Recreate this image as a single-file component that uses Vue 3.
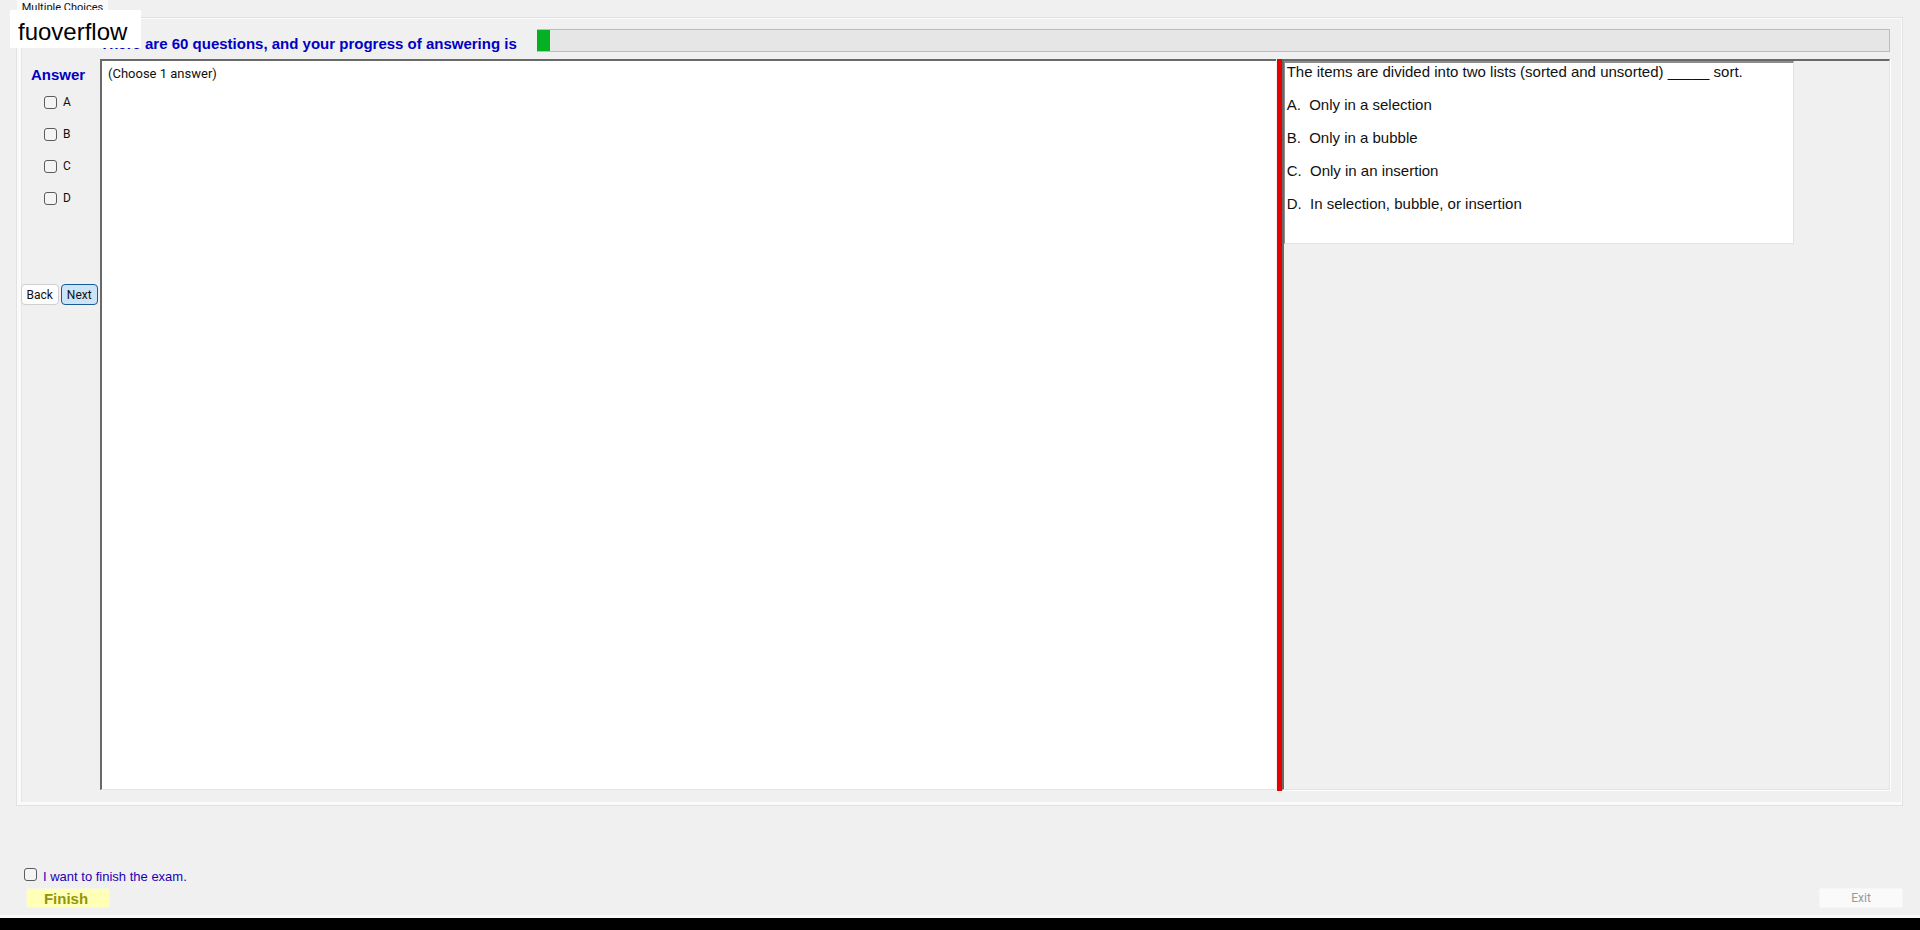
<script setup>
import { ref } from 'vue'

const total = 60
const progress = ref(1)
const options = ['A', 'B', 'C', 'D']
const chosen = ref([])
const wantsFinish = ref(false)
const lines = [
  'The items are divided into two lists (sorted and unsorted) _____ sort.',
  'A.  Only in a selection',
  'B.  Only in a bubble',
  'C.  Only in an insertion',
  'D.  In selection, bubble, or insertion'
]
</script>

<template>
  <div class="window">
    <div class="watermark">fuoverflow</div>
    <div class="tabs" role="tablist">
      <button class="tab" role="tab" aria-selected="true">Multiple Choices</button>
    </div>
    <main class="page">
      <div class="page-inner">
        <header class="status">
          <h1 class="status-text">There are {{ total }} questions, and your progress of answering is</h1>
          <div class="bar" role="progressbar" :aria-valuenow="progress" aria-label="Progress of answering">
            <div class="bar-fill" :style="{ width: progress + '%' }"></div>
          </div>
        </header>
        <div class="body">
          <aside class="answers">
            <h2 class="answers-title">Answer</h2>
            <div class="options">
              <label v-for="o in options" :key="o" class="option">
                <input v-model="chosen" class="box" type="checkbox" :value="o" />
                <span>{{ o }}</span>
              </label>
            </div>
            <div class="nav">
              <button class="btn">Back</button>
              <button class="btn next">Next</button>
            </div>
          </aside>
          <div class="split">
            <section class="instructions">(Choose 1 answer)</section>
            <div class="splitter"></div>
            <section class="viewer">
              <div class="question">
                <p v-for="l in lines" :key="l" class="line">{{ l }}</p>
              </div>
            </section>
          </div>
        </div>
      </div>
    </main>
    <footer class="footer">
      <div class="finish-group">
        <label class="finish-check">
          <input v-model="wantsFinish" class="box" type="checkbox" />
          <span>I want to finish the exam.</span>
        </label>
        <button class="wide finish">Finish</button>
      </div>
      <button class="wide exit" disabled>Exit</button>
    </footer>
    <div class="taskbar"></div>
  </div>
</template>

<style>
body {
  margin: 0;
  background: #f0f0f0;
}
</style>

<style scoped>
.window {
  position: relative;
  display: flex;
  flex-direction: column;
  min-height: 100vh;
  background: #f0f0f0;
  color: #111;
  font-family: Roboto, "Liberation Sans", sans-serif;
  font-size: 12px;
}
h1,
h2,
p {
  margin: 0;
}
button {
  box-sizing: border-box;
  padding: 0;
  font-family: inherit;
  color: inherit;
}
.watermark {
  position: absolute;
  z-index: 2;
  left: 10px;
  top: 10px;
  padding: 5px 14px 0 8px;
  background: #fff;
  color: #000;
  font-family: "Liberation Sans", sans-serif;
  font-size: 24px;
  line-height: 33px;
}
.tabs {
  display: flex;
  height: 17px;
  padding-left: 17px;
}
.tab {
  width: 91px;
  padding-bottom: 1px;
  border: 0;
  background: #fafafa;
  font-size: 11px;
  line-height: 14px;
}
.page {
  display: flex;
  flex: 1;
  margin: 0 17px 0 16px;
  border: 1px solid #e2e2e2;
  background: #fafafa;
}
.page-inner {
  display: flex;
  flex: 1;
  flex-direction: column;
  margin: 1px 1px 3px 4px;
  padding: 0 11px 12px 0;
  border-left: 1px solid #e6e6e6;
  background: #f0f0f0;
}
.status {
  display: flex;
  align-items: flex-start;
  gap: 20px;
  height: 40px;
  padding-left: 78px;
}
.status-text {
  padding-top: 16px;
  color: #0000c4;
  font-family: "Liberation Sans", sans-serif;
  font-size: 15px;
  font-weight: bold;
  line-height: 18px;
  white-space: nowrap;
}
.bar {
  flex: 1;
  box-sizing: border-box;
  height: 23px;
  margin-top: 10px;
  border: solid #bcbcbc;
  border-width: 1px 1px 1px 0;
  background: #e6e6e6;
}
.bar-fill {
  height: 100%;
  background: #06b025;
}
.body {
  display: flex;
  flex: 1;
}
.answers {
  width: 78px;
}
.answers-title {
  padding: 6px 0 0 9px;
  color: #0000c4;
  font-family: "Liberation Sans", sans-serif;
  font-size: 15px;
  font-weight: bold;
  line-height: 20px;
}
.options {
  display: flex;
  flex-direction: column;
  padding: 1px 0 0 22px;
}
.option {
  display: flex;
  align-items: center;
  gap: 6px;
  height: 32px;
}
.box {
  flex: none;
  box-sizing: border-box;
  width: 13px;
  height: 13px;
  margin: 0;
  border: 1px solid #5c5c5c;
  border-radius: 3px;
  background: #f4f4f4;
  appearance: none;
}
.box:checked {
  background: #0067c0;
}
.nav {
  display: flex;
  gap: 2px;
  padding-top: 70px;
  margin-left: -1px;
  margin-right: 2px;
}
.btn {
  flex: 1;
  height: 21px;
  border: 1px solid #d0d0d0;
  border-radius: 4px;
  background: #fdfdfd;
  font-size: 12px;
}
.next {
  border-color: #1c5a94;
  background: #cce4f7;
}
.split {
  display: grid;
  flex: 1;
  grid-template-columns: 1176fr 5px 608fr;
}
.instructions {
  margin-right: 1px;
  padding: 3px 6px;
  border: solid #696969;
  border-width: 2px 0 1px 2px;
  border-bottom-color: #e3e3e3;
  background: #fff;
  font-size: 13px;
  line-height: 20px;
}
.splitter {
  margin-bottom: -1px;
  background: #e80000;
}
.viewer {
  border: 2px solid #696969;
  border-right: 1px solid #e3e3e3;
  border-bottom: 1px solid #e3e3e3;
  box-shadow: 1px 1px #fff;
}
.question {
  box-sizing: border-box;
  max-width: 510px;
  min-height: 183px;
  padding: 0 2px;
  border: solid #8c8c8c;
  border-width: 2px 1px 1px 1px;
  border-right-color: #e3e3e3;
  border-bottom-color: #e3e3e3;
  background: #fff;
  font-family: "Liberation Sans", sans-serif;
  font-size: 15px;
}
.line {
  padding-bottom: 15px;
  line-height: 18px;
  white-space: pre;
}
.footer {
  display: flex;
  align-items: flex-end;
  justify-content: space-between;
  box-sizing: border-box;
  height: 112px;
  padding: 0 17px 0 24px;
  border-bottom: 3px solid #fafafa;
}
.finish-group {
  display: flex;
  flex-direction: column;
  align-items: flex-start;
}
.finish-check {
  display: flex;
  gap: 6px;
  color: #1a00b4;
  font-family: "Liberation Sans", sans-serif;
  font-size: 13px;
}
.finish-check span {
  line-height: 18px;
}
.wide {
  width: 84px;
  height: 20px;
  margin-bottom: 7px;
  border: 1px solid #f6f6e4;
  border-radius: 2px;
}
.finish {
  margin-top: 2px;
  margin-left: 2px;
  padding-right: 4px;
  background: #ffffb8;
  color: #92960a;
  font-family: "Liberation Sans", sans-serif;
  font-size: 15px;
  font-weight: bold;
}
.exit {
  border-color: #f6f6f6;
  background: #fafafa;
  color: #999;
  font-size: 12px;
}
.taskbar {
  height: 12px;
  background: #000;
}
</style>
